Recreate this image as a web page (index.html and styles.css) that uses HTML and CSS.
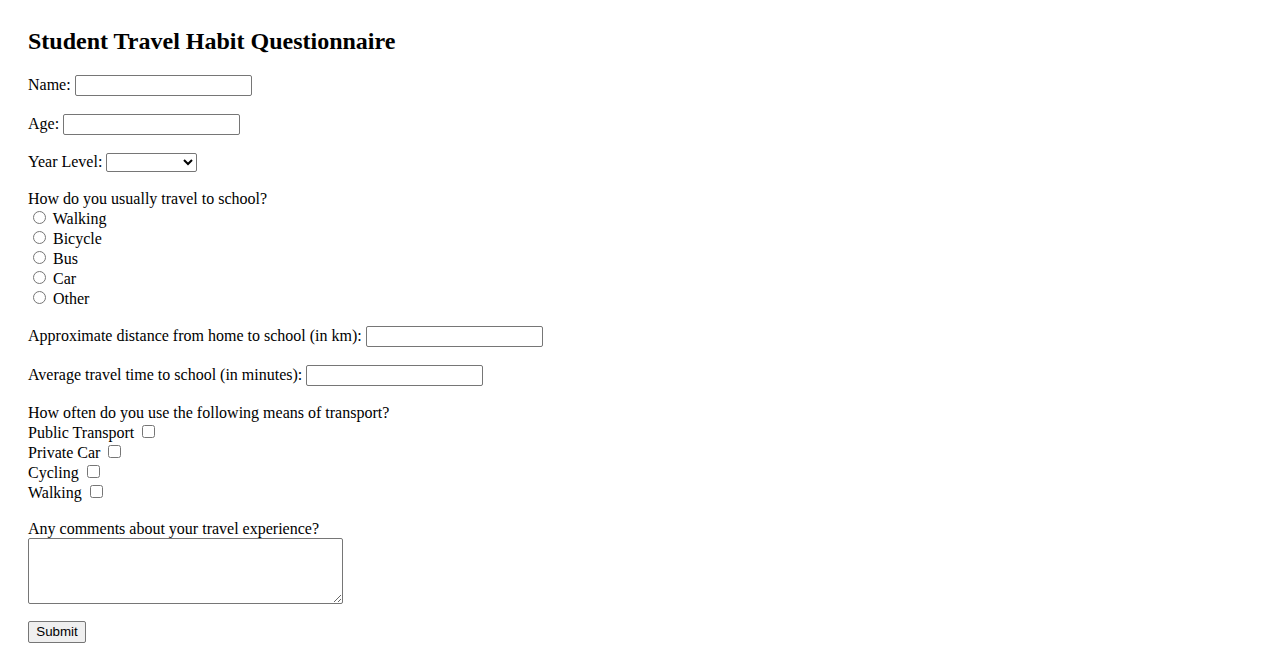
FILE: index.html
```html
<!DOCTYPE html>
<html lang="en">
<head>
<meta charset="utf-8">
<title>Student Travel Habit Questionnaire</title>
<link rel="stylesheet" href="styles.css">
</head>
<body>
<h2 class="title">Student Travel Habit Questionnaire</h2>
<form class="form">
  <div class="row">
    <label for="name">Name:</label>
    <input class="text" type="text" id="name">
  </div>
  <div class="row row-select">
    <label for="age">Age:</label>
    <input class="text" type="text" id="age">
  </div>
  <div class="row row-sel">
    <label for="year">Year Level:</label>
    <select class="select" id="year"><option></option></select>
  </div>
  <div class="group">
    <div class="line">How do you usually travel to school?</div>
    <div class="opt"><input class="radio" type="radio" name="travel" id="t1"> <label for="t1">Walking</label></div>
    <div class="opt"><input class="radio" type="radio" name="travel" id="t2"> <label for="t2">Bicycle</label></div>
    <div class="opt"><input class="radio" type="radio" name="travel" id="t3"> <label for="t3">Bus</label></div>
    <div class="opt"><input class="radio" type="radio" name="travel" id="t4"> <label for="t4">Car</label></div>
    <div class="opt"><input class="radio" type="radio" name="travel" id="t5"> <label for="t5">Other</label></div>
  </div>
  <div class="row">
    <label for="dist">Approximate distance from home to school (in km):</label>
    <input class="text" type="text" id="dist">
  </div>
  <div class="row">
    <label for="time">Average travel time to school (in minutes):</label>
    <input class="text" type="text" id="time">
  </div>
  <div class="group">
    <div class="line">How often do you use the following means of transport?</div>
    <div class="opt"><label for="c1">Public Transport</label> <input class="check" type="checkbox" id="c1"></div>
    <div class="opt"><label for="c2">Private Car</label> <input class="check" type="checkbox" id="c2"></div>
    <div class="opt"><label for="c3">Cycling</label> <input class="check" type="checkbox" id="c3"></div>
    <div class="opt"><label for="c4">Walking</label> <input class="check" type="checkbox" id="c4"></div>
  </div>
  <div class="group group-comments">
    <div class="line"><label for="comments">Any comments about your travel experience?</label></div>
    <textarea class="area" id="comments"></textarea>
  </div>
  <button class="submit" type="submit">Submit</button>
</form>
</body>
</html>
```
FILE: styles.css
```css
html, body {
  background: #ffffff;
}
body {
  margin: 8px;
  padding: 20px;
  font-family: "Liberation Serif", "Times New Roman", serif;
  font-size: 16px;
  color: #000000;
}
.title {
  margin: 0 0 19.5px 0;
  font-size: 24px;
  font-weight: bold;
}
.form {
  margin: 0;
}
.row {
  height: 21px;
  margin-bottom: 18px;
  white-space: nowrap;
}
.row-sel {
  height: 19px;
}
.text {
  box-sizing: border-box;
  width: 177px;
  height: 21px;
  margin: 0;
  padding: 1px 2px;
  border: 1px solid #767676;
  border-radius: 2px;
  font-family: "Liberation Sans", Arial, sans-serif;
  font-size: 13.333px;
  background: #ffffff;
}
.select {
  box-sizing: border-box;
  width: 91px;
  height: 19px;
  margin: 0;
  border: 1px solid #767676;
  border-radius: 2px;
  font-family: "Liberation Sans", Arial, sans-serif;
  font-size: 13.333px;
  background: #ffffff;
}
.group {
  margin-bottom: 18px;
}
.line {
  height: 18px;
}
.opt {
  height: 20px;
  white-space: nowrap;
}
.radio {
  width: 13px;
  height: 13px;
  margin: 3px 3px 0 5px;
}
.check {
  width: 13px;
  height: 13px;
  margin: 3px 3px 3px 4px;
}
.group-comments {
  margin-bottom: 17px;
}
.line + .area {
  display: block;
}
.area {
  box-sizing: border-box;
  width: 315px;
  height: 66px;
  margin: 0;
  padding: 2px;
  border: 1px solid #767676;
  border-radius: 2px;
  font-family: "Liberation Mono", monospace;
  font-size: 13.333px;
}
.submit {
  display: block;
  box-sizing: border-box;
  width: 58px;
  height: 22px;
  margin: 0;
  padding: 1px 6px;
  border: 1px solid #767676;
  border-radius: 2px;
  background: #efefef;
  font-family: "Liberation Sans", Arial, sans-serif;
  font-size: 13.333px;
  color: #000000;
}
```
